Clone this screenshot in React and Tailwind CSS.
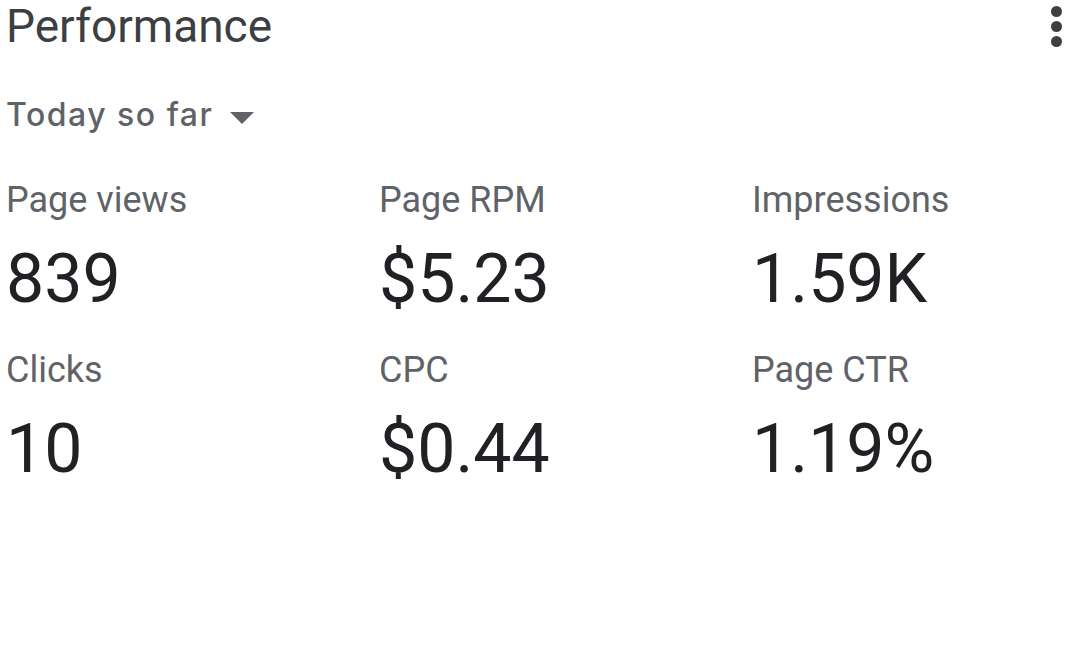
import React from 'react';

const stats = [
  { label: 'Page views', value: '839' },
  { label: 'Page RPM', value: '$5.23' },
  { label: 'Impressions', value: '1.59K' },
  { label: 'Clicks', value: '10' },
  { label: 'CPC', value: '$0.44' },
  { label: 'Page CTR', value: '1.19%' },
];

export default function App() {
  return (
    <div className="w-[1089px] h-[666px] bg-white overflow-hidden font-['Roboto',sans-serif] pl-[6px]">
      {/* Header */}
      <div className="flex justify-between items-center h-[52px] pr-[27px]">
        <h1 className="text-[46px] leading-[52px] text-[#3c4043] font-normal">Performance</h1>
        <button className="flex flex-col gap-[4px]">
          <span className="block w-[11px] h-[11px] rounded-full bg-[#3c4043]" />
          <span className="block w-[11px] h-[11px] rounded-full bg-[#3c4043]" />
          <span className="block w-[11px] h-[11px] rounded-full bg-[#3c4043]" />
        </button>
      </div>

      {/* Date range */}
      <div className="mt-[45px] flex items-center">
        <span className="font-['Inter',sans-serif] text-[32px] leading-[36px] font-medium tracking-[1.5px] text-[#5f6368]">Today so far</span>
        <svg width="24" height="12" viewBox="0 0 24 12" className="ml-[17px] mt-[6px]">
          <polygon points="0,0 24,0 12,12" fill="#5f6368" />
        </svg>
      </div>

      {/* Stats */}
      <div className="mt-[46px] grid grid-cols-[repeat(3,373px)] gap-y-[32px]">
        {stats.map((s) => (
          <div key={s.label} className="flex flex-col">
            <span className="text-[36px] leading-[42px] text-[#5f6368]">{s.label}</span>
            <span className="mt-[20px] text-[68px] leading-[76px] text-[#202124]">{s.value}</span>
          </div>
        ))}
      </div>
    </div>
  );
}
